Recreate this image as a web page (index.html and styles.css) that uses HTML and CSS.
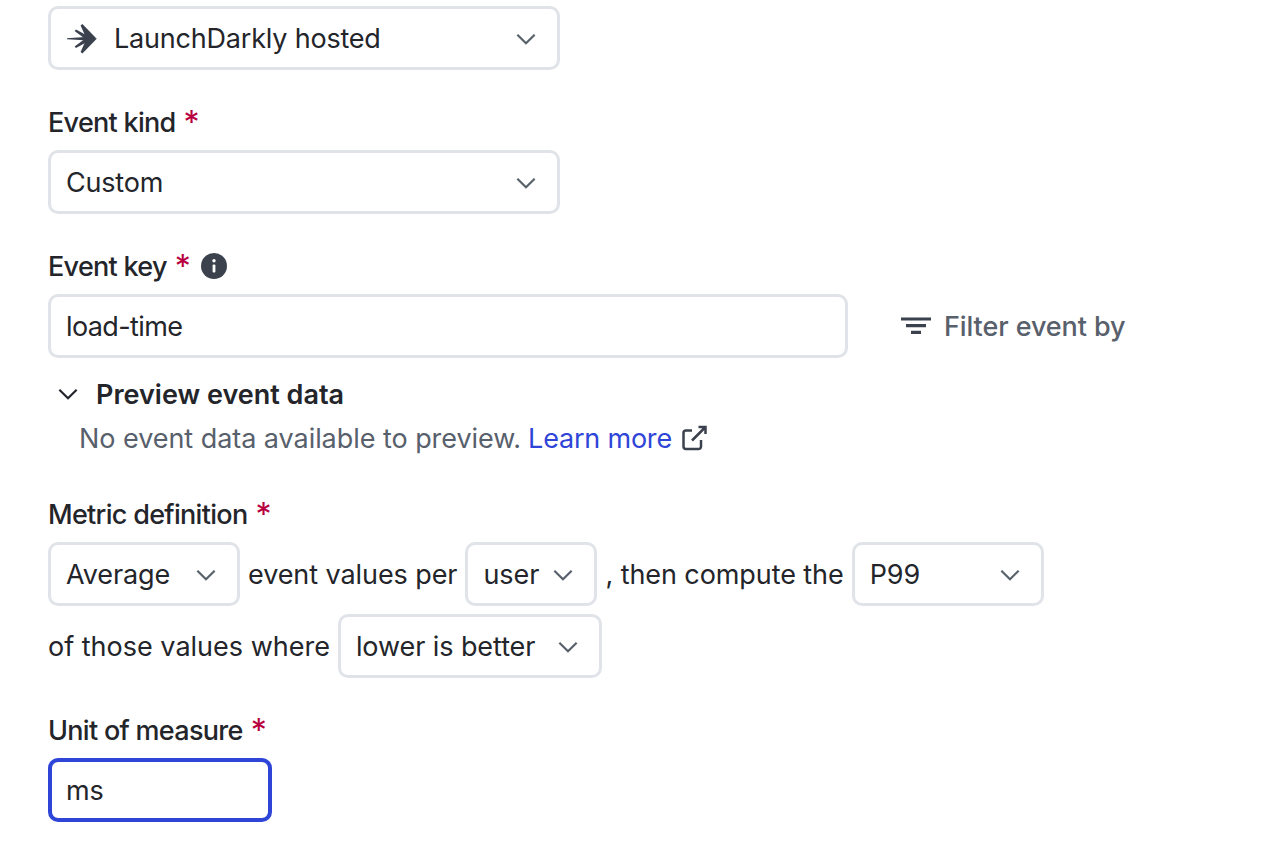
FILE: index.html
```html
<!DOCTYPE html>
<html lang="en">
<head>
    <meta charset="UTF-8">
    <title>Create metric</title>
    <link rel="stylesheet" href="styles.css">
</head>
<body>
    <form class="metric-form">
        <div class="form-group">
            <div class="select select-wide">
                <svg class="launch-icon" viewBox="0 0 32 32" width="32" height="32">
                    <path d="M1 15.200L22 13.800L30.700 15.700L22 17.600L1 16.200Z"/>
                    <path d="M14.600 2.400L16.400 1L30.700 15.700L20.500 15.700Z"/>
                    <path d="M14.600 29L16.400 30.400L30.700 15.700L20.500 15.700Z"/>
                    <path d="M8.600 8L10 6.400L27 15.700L19 15.700Z"/>
                    <path d="M8.600 23.400L10 25L27 15.700L19 15.700Z"/>
                </svg>
                <span class="select-value">LaunchDarkly hosted</span>
                <svg class="chevron" viewBox="0 0 24 24" width="26" height="26"><path d="M4 8l8 8 8-8"/></svg>
            </div>
        </div>

        <div class="form-group">
            <label class="field-label">Event kind <span class="required">*</span></label>
            <div class="select select-wide">
                <span class="select-value">Custom</span>
                <svg class="chevron" viewBox="0 0 24 24" width="26" height="26"><path d="M4 8l8 8 8-8"/></svg>
            </div>
        </div>

        <div class="form-group form-group-event">
            <label class="field-label">Event key <span class="required">*</span>
                <svg class="info-icon" viewBox="0 0 28 28" width="28" height="28">
                    <circle cx="14" cy="14" r="13" fill="#3b424e"/>
                    <rect x="12.600" y="12.400" width="2.800" height="8" rx="1" fill="#fff"/>
                    <circle cx="14" cy="8.800" r="1.700" fill="#fff"/>
                </svg>
            </label>
            <div class="event-key-row">
                <input class="text-input event-key-input" type="text" value="load-time">
                <button type="button" class="filter-button">
                    <svg viewBox="0 0 32 32" width="32" height="32"><path d="M1 9h30M6 15.700h20M11 22.300h10"/></svg>
                    Filter event by
                </button>
            </div>
            <div class="preview-toggle">
                <svg class="chevron dark" viewBox="0 0 24 24" width="26" height="26"><path d="M4 8l8 8 8-8"/></svg>
                <span>Preview event data</span>
            </div>
            <p class="preview-text">No event data available to preview.
                <a href="#" class="learn-link">Learn more</a>
                <svg class="external-icon" viewBox="0 0 28 28" width="28" height="28">
                    <path d="M12 6.500H6a2.500 2.500 0 0 0-2.500 2.500v13.500A2.500 2.500 0 0 0 6 25h12.500a2.500 2.500 0 0 0 2.500-2.500V16M12 16.500 25.500 3M18.500 3h7v7"/>
                </svg>
            </p>
        </div>

        <div class="form-group">
            <label class="field-label">Metric definition <span class="required">*</span></label>
            <div class="definition">
                <div class="select select-agg">
                    <span class="select-value">Average</span>
                    <svg class="chevron" viewBox="0 0 24 24" width="26" height="26"><path d="M4 8l8 8 8-8"/></svg>
                </div>
                <span>event values per</span>
                <div class="select select-user">
                    <span class="select-value">user</span>
                    <svg class="chevron" viewBox="0 0 24 24" width="26" height="26"><path d="M4 8l8 8 8-8"/></svg>
                </div>
                <span>, then compute the</span>
                <div class="select select-agg">
                    <span class="select-value">P99</span>
                    <svg class="chevron" viewBox="0 0 24 24" width="26" height="26"><path d="M4 8l8 8 8-8"/></svg>
                </div>
                <span class="definition-lead">of those values where</span>
                <div class="select select-better">
                    <span class="select-value">lower is better</span>
                    <svg class="chevron" viewBox="0 0 24 24" width="26" height="26"><path d="M4 8l8 8 8-8"/></svg>
                </div>
            </div>
        </div>

        <div class="form-group">
            <label class="field-label">Unit of measure <span class="required">*</span></label>
            <input class="text-input unit-input" type="text" value="ms">
        </div>
    </form>
</body>
</html>
```
FILE: styles.css
```css
:root {
  --text-color: #23252a;
  --muted-color: #58606c;
  --border-color: #e0e3e8;
  --accent-color: #2f45d8;
  --required-color: #b8003f;
  --icon-color: #3b424e;
}

* {
  box-sizing: border-box;
  margin: 0;
  padding: 0;
  font-family: Inter, sans-serif;
}

body {
  background-color: #ffffff;
  color: var(--text-color);
  font-size: 27px;
  letter-spacing: -0.2px;
}

.metric-form {
  padding: 6px 48px 0;
}

.form-group {
  margin-bottom: 36px;
}

.form-group-event {
  margin-bottom: 42px;
}

.field-label {
  display: flex;
  align-items: center;
  height: 36px;
  margin-bottom: 8px;
  padding-bottom: 4px;
  font-weight: 500;
  letter-spacing: -0.7px;
  gap: 8px;
}

.required {
  color: var(--required-color);
  font-size: 32px;
  font-weight: 400;
}

.info-icon {
  margin-left: 2px;
}

/* Selects */
.select {
  display: flex;
  align-items: center;
  height: 64px;
  padding: 1px 18px 0 15px;
  border: 3px solid var(--border-color);
  border-radius: 10px;
  background-color: #ffffff;
  flex-shrink: 0;
}

.select-value {
  flex: 1;
  white-space: nowrap;
}

.chevron {
  flex-shrink: 0;
  fill: none;
  stroke: var(--muted-color);
  stroke-width: 2;
}

.chevron.dark {
  stroke: var(--text-color);
}

.select-wide {
  width: 512px;
}

.launch-icon {
  fill: var(--icon-color);
  margin-right: 16px;
}

.select-agg {
  width: 192px;
}

.select-user {
  width: 132px;
}

.select-better {
  width: 264px;
}

/* Inputs */
.text-input {
  height: 64px;
  padding: 1px 15px 0;
  border: 3px solid var(--border-color);
  border-radius: 10px;
  font-size: 27px;
  letter-spacing: -0.2px;
  color: var(--text-color);
  background-color: #ffffff;
  outline: none;
}

.event-key-row {
  display: flex;
  align-items: center;
}

.event-key-input {
  width: 800px;
  letter-spacing: -0.6px;
}

.filter-button {
  display: flex;
  align-items: center;
  gap: 12px;
  margin-left: 52px;
  border: none;
  background: none;
  font-size: 27px;
  font-weight: 500;
  letter-spacing: -0.1px;
  color: var(--muted-color);
}

.filter-button svg {
  fill: none;
  stroke: var(--icon-color);
  stroke-width: 3.200;
}

.preview-toggle {
  display: flex;
  align-items: center;
  gap: 15px;
  height: 36px;
  margin-top: 18px;
  padding-left: 7px;
  font-weight: 600;
  letter-spacing: 0;
}

.preview-text {
  display: flex;
  align-items: center;
  gap: 7px;
  height: 36px;
  margin-top: 8px;
  padding-left: 31px;
  color: var(--muted-color);
  letter-spacing: -0.05px;
}

.learn-link {
  color: var(--accent-color);
  text-decoration: none;
  letter-spacing: -0.2px;
}

.external-icon {
  fill: none;
  stroke: var(--icon-color);
  stroke-width: 2.500;
  margin-left: 1px;
}

/* Metric definition sentence */
.definition {
  display: flex;
  flex-wrap: wrap;
  align-items: center;
  gap: 8px;
  width: 1100px;
  letter-spacing: -0.08px;
}

.definition-lead {
  letter-spacing: 0;
}

.unit-input {
  display: block;
  width: 224px;
  border: 4px solid var(--accent-color);
  padding: 1px 14px 0;
  border-radius: 10px;
}
```
